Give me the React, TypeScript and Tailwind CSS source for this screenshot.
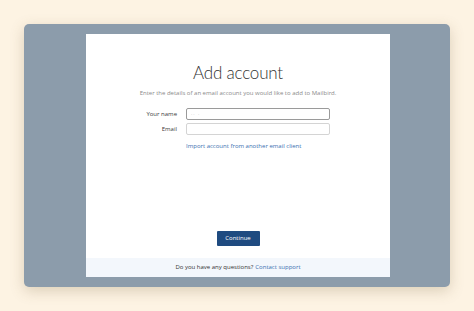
import React from "react";

export default function App() {
  return (
    <div
      className="w-[474px] h-[311px] bg-[#fdf3e3] pt-[24px] pl-[24px] overflow-hidden"
      style={{ fontFamily: '"Open Sans", "Noto Sans", sans-serif' }}
    >
      <div className="w-[426px] h-[263px] rounded-[5px] bg-[#8c9cab] shadow-[0_4px_14px_rgba(120,100,60,0.25)] pt-[10px] pl-[62px]">
        <div className="w-[304px] h-[243px] bg-white flex flex-col">
          <div className="flex-1 flex flex-col items-center pt-[27px]">
            <h1
              className="text-[17px] leading-[23px] font-light tracking-[-0.2px] text-[#333]"
              style={{ fontFamily: 'Lato, "Open Sans", sans-serif' }}
            >
              Add account
            </h1>
            <p className="mt-[5px] text-[6px] leading-[8px] text-[#8a8a8a]">
              Enter the details of an email account you would like to add to Mailbird.
            </p>
            <div className="mt-[11px] w-full flex flex-col gap-[3px]">
              <div className="flex items-center">
                <span className="w-[91px] text-right text-[6px] text-[#3a3a3a]">Your name</span>
                <div className="ml-[9px] w-[144px] h-[12px] rounded-[2px] border border-[#9a9a9a] flex items-center pl-[4px]">
                  <span className="text-[5px] leading-[5px] text-[#bbb] tracking-[1px]">·· ·</span>
                </div>
              </div>
              <div className="flex items-center">
                <span className="w-[91px] text-right text-[6px] text-[#3a3a3a]">Email</span>
                <div className="ml-[9px] w-[144px] h-[12px] rounded-[2px] border border-[#d4d4d4]" />
              </div>
              <div className="flex">
                <span className="ml-[100px] mt-[4px] text-[6px] text-[#3a6fb0]">
                  Import account from another email client
                </span>
              </div>
            </div>
            <div className="flex-1" />
            <button className="mb-[12px] w-[43px] h-[15px] rounded-[1px] bg-[#1f4b80] text-white text-[6px] flex items-center justify-center">
              Continue
            </button>
          </div>
          <div className="h-[19px] bg-[#f3f7fc] flex items-center justify-center text-[6px]">
            <span className="text-[#333]">Do you have any questions?</span>
            <span className="ml-[2px] text-[#3a6fb0]">Contact support</span>
          </div>
        </div>
      </div>
    </div>
  );
}
